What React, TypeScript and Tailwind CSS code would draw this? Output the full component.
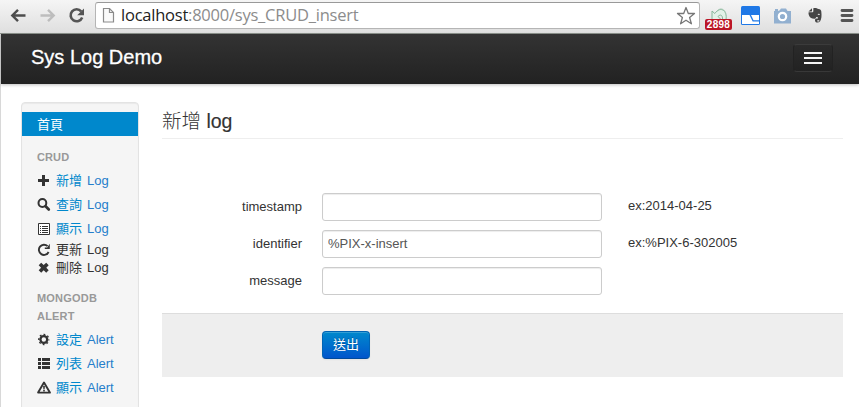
import type { ReactNode } from "react";

const icons: Record<string, ReactNode> = {
  plus: <path d="M5 1h3v4h4v3H8v4H5V8H1V5h4z" fill="#333" />,
  search: (
    <g fill="none" stroke="#333">
      <circle cx="5.4" cy="5" r="3.9" strokeWidth="2" />
      <path d="M8.6 8.2l3.2 3.3" strokeWidth="2.7" strokeLinecap="round" />
    </g>
  ),
  listAlt: (
    <g>
      <path d="M1.5 1.5h11v11h-11z" fill="#fff" stroke="#333" />
      <path d="M3 4.5h1M3 6.5h1M3 8.5h1M3 10.5h1M5 4.5h6M5 6.5h6M5 8.5h6M5 10.5h6" stroke="#333" />
    </g>
  ),
  refresh: (
    <g>
      <path d="M10.6 3.2A5.1 5.1 0 1 0 11.6 9" fill="none" stroke="#333" strokeWidth="1.9" />
      <path d="M12.8 .8v5.2H7.8V4.6h2.4z" fill="#333" />
    </g>
  ),
  remove: (
    <path d="M1.7 4.2L4.2 1.7 6.7 4.1 9.2 1.7l2.5 2.5L9.3 6.7l2.4 2.5-2.5 2.5-2.5-2.4-2.5 2.4-2.5-2.5 2.4-2.5z" fill="#333" />
  ),
  cog: (
    <g fill="none" stroke="#333">
      <circle cx="6.8" cy="6.5" r="3.4" strokeWidth="2.3" />
      <circle cx="6.8" cy="6.5" r="5" strokeWidth="1.4" strokeDasharray="1.8 2.127" strokeDashoffset="0.9" />
    </g>
  ),
  list: (
    <path d="M1 1h3v3H1zM5 1h8v3H5zM1 5h3v3H1zM5 5h8v3H5zM1 9h3v3H1zM5 9h8v3H5z" fill="#333" />
  ),
  warning: (
    <g>
      <path d="M7 1.6L12.9 11.6H1.1z" fill="none" stroke="#333" strokeWidth="1.9" strokeLinejoin="round" />
      <path d="M6.1 5h1.8l-.3 3.4H6.4zM6.2 9h1.6v1.4H6.2z" fill="#333" />
    </g>
  ),
};

function NavItem({ icon, han, word, link = true }: { icon: string; han: string; word: string; link?: boolean }) {
  return (
    <li
      className={
        link
          ? "flex h-6 items-center pl-[15px] text-[#0088cc]"
          : "flex h-[18px] items-center pl-[15px] text-[#333]"
      }
    >
      <svg width="14" height="14" viewBox="0 0 14 14" className="mr-[5px] shrink-0">
        {icons[icon]}
      </svg>
      <span className="w-[26px] whitespace-nowrap">{han}</span>
      <span className={link ? "ml-[5px] text-[#267ecb]" : "ml-[5px]"}>{word}</span>
    </li>
  );
}

function Field({ label, value = "", hint = "" }: { label: string; value?: string; hint?: string }) {
  return (
    <div className="mb-[9px] flex h-7">
      <label className="w-[140px] pt-[5px] text-right">{label}</label>
      <input
        type="text"
        defaultValue={value}
        className="ml-5 h-7 w-[280px] rounded-[3px] border border-[#ccc] bg-white px-[5px] pb-[2px] text-[13px] text-[#555] shadow-[inset_0_1px_1px_rgba(0,0,0,0.075)] outline-none"
      />
      <span className="ml-[26px] pt-[4px]">{hint}</span>
    </div>
  );
}

function BrowserBar() {
  return (
    <header className="flex h-[34px] shrink-0 border-b border-[#8e948e] bg-gradient-to-b from-[#f5f5f5] to-[#dfdfdf]">
      <svg width="95" height="32" viewBox="0 0 95 32" className="shrink-0" fill="none">
        <path d="M25.5 15.5H12.5M18 9.8l-5.7 5.7 5.7 5.7" stroke="#4d4d4d" strokeWidth="2.4" />
        <path d="M40.5 15.5h13M48 9.8l5.7 5.7-5.7 5.7" stroke="#bdbdbd" strokeWidth="2.4" />
        <path d="M81.2 11.3a6 6 0 1 0 1 6.2" stroke="#555" strokeWidth="2.6" />
        <path d="M84 8.5v6.8h-6.8z" fill="#555" />
      </svg>
      <div className="mt-[2px] flex h-[27px] w-[605px] shrink-0 items-center rounded-[3px] border border-[#b5b5b5] border-t-[#999] bg-white">
        <svg width="14" height="17" viewBox="0 0 14 17" className="ml-[6px]" fill="none">
          <path d="M1.5 1.5h6l4 4v9.5h-10z" fill="#fafafa" stroke="#8b8b8b" strokeWidth="1.2" />
          <path d="M7.5 1.5v4h4" stroke="#8b8b8b" strokeWidth="1.2" />
        </svg>
        <span className="ml-[5px] w-[555px] whitespace-nowrap pb-px font-['Open_Sans',sans-serif] text-[16.5px] leading-[24px] tracking-[-0.23px] text-[#8c8c8c]">
          <span className="text-[#222]">localhost</span>:8000/sys_CRUD_insert
        </span>
        <svg width="20" height="20" viewBox="0 0 20 20" className="shrink-0" fill="none">
          <path d="M10 1.5l2.3 6h6.2l-4.9 4 1.8 6.3L10 14.2l-5.4 3.6 1.8-6.3-4.9-4h6.2z" stroke="#777" strokeWidth="1.3" strokeLinejoin="round" />
        </svg>
      </div>
      <div className="relative h-8 w-[159px]">
        <svg width="159" height="32" viewBox="0 0 159 32" fill="none">
          <path d="M12 11v8.5h9l-3-3c2.6-2.6 4.6-1.6 4.6 3H26c1.6-9-5.6-14-11.2-6z" fill="#e3f1e8" stroke="#86b699" />
          <path d="M17 11.5c3-4.5 8-2.5 8.8 2.5" stroke="#a3c8b1" />
          <rect x="41" y="6" width="19" height="19" rx="1.5" fill="#1f78e6" />
          <path d="M42 15h7.5l3.2 6.5H59V24H42z" fill="#fff" />
          <path d="M51 15h8v5.3h-5.5z" fill="#fff" />
          <path d="M75 11V9h3v2l1.5-.5 1.5-2h5l1.5 2.5H91v12.5H74V11z" fill="#92b0d0" />
          <circle cx="82.5" cy="16.5" r="3.7" stroke="#fff" strokeWidth="2.2" />
          <path d="M113.3 8.3c2-.8 3.7.2 5.2.7 1.8.2 2.6.8 2.8 2.5.5 4 .3 7.700-1.300 10-1.300 1.600-4.700 1.400-5-.8-.2-2 1.500-2.600 2.800-1.900v-1.600c-1.500-.6-1.900.3-2.300 1.300-1.200.6-3.300.2-4.900-.7-1.700-1.600-2.300-3.600-2-5.500h3.800c.9 0 1.100-.5.9-4z" fill="#454545" />
          <path d="M112 8.200L108.400 11.500h2.800c.6 0 .8-.2.8-.8z" fill="#454545" />
          <path d="M117.600 14.700c.4-1.300 2.200-1 2.300.4zM117.300 20.200h2v1.200h-2z" fill="#eee" />
          <path d="M142 10.500h10M142 15.500h10M142 20.500h10" stroke="#555" strokeWidth="2.800" strokeLinecap="round" />
        </svg>
        <span className="absolute left-[5px] top-[19px] h-[11px] w-[27px] rounded-[2px] bg-[#bb1525] text-center text-[10px] font-bold leading-[11px] tracking-[0.3px] text-white">
          2898
        </span>
      </div>
    </header>
  );
}

export default function App() {
  return (
    <div className="flex h-[407px] w-[859px] flex-col overflow-hidden bg-white font-['Liberation_Sans','Noto_Sans_CJK_TC',sans-serif] text-[13px] leading-[18px] text-[#333]">
      <BrowserBar />
      <div className="flex min-h-0 flex-1 flex-col border-l border-[#d8d8d8]">
        <nav className="flex h-[50px] shrink-0 items-center justify-between bg-gradient-to-b from-[#333] to-[#222] pl-[30px] pr-[26px] shadow-[0_1px_3px_rgba(0,0,0,0.25)]">
          <span className="-mt-[5px] text-[20px] leading-[20px] text-white [-webkit-text-stroke:0.3px_white]">Sys Log Demo</span>
          <button className="-mt-[3px] flex h-[28px] w-[40px] flex-col items-center justify-center gap-[3px] rounded-[4px] border border-[#222] border-t-[#3b3b3b] border-b-[#383838] bg-gradient-to-b from-[#2b2b2b] to-[#222]">
            <span className="h-[2px] w-[18px] bg-[#f5f5f5]" />
            <span className="h-[2px] w-[18px] bg-[#f5f5f5]" />
            <span className="h-[2px] w-[18px] bg-[#f5f5f5]" />
          </button>
        </nav>
        <div className="flex min-h-0 flex-1 pl-5 pr-4 pt-[18px]">
          <aside className="h-[340px] w-[118px] shrink-0 rounded-[4px] border border-[#e3e3e3] bg-[#f5f5f5] pt-[9px] shadow-[inset_0_1px_1px_rgba(0,0,0,0.05)]">
            <ul>
              <li className="h-6 bg-[#0088cc] pl-[15px] leading-[25px] text-white">首頁</li>
              <li className="mt-[9px] h-6 py-[3px] pl-[15px] text-[11px] font-bold tracking-[0.1px] text-[#999]">CRUD</li>
              <NavItem icon="plus" han="新增" word="Log" />
              <NavItem icon="search" han="查詢" word="Log" />
              <NavItem icon="listAlt" han="顯示" word="Log" />
              <NavItem icon="refresh" han="更新" word="Log" link={false} />
              <NavItem icon="remove" han="刪除" word="Log" link={false} />
              <li className="mt-[9px] h-[42px] py-[3px] pl-[15px] text-[11px] font-bold tracking-[0.2px] text-[#999]">
                MONGODB
                <br />
                ALERT
              </li>
              <NavItem icon="cog" han="設定" word="Alert" />
              <NavItem icon="list" han="列表" word="Alert" />
              <NavItem icon="warning" han="顯示" word="Alert" />
            </ul>
          </aside>
          <main className="ml-[23px] flex-1">
            <h1 className="h-[37px] border-b border-[#eee] pt-px text-[19.5px] font-normal leading-[36px]">
              <span className="font-light">新增</span> <span className="[-webkit-text-stroke:0.15px_#333]">log</span>
            </h1>
            <form>
              <div className="h-[120px] pt-[54px]">
                <Field label="timestamp" hint="ex:2014-04-25" />
                <Field label="identifier" value="%PIX-x-insert" hint="ex:%PIX-6-302005" />
                <Field label="message" />
              </div>
              <div className="mt-[54px] h-16 border-t border-[#ddd] bg-[#eee] pl-[160px] pt-[17px]">
                <button
                  type="button"
                  className="block h-7 w-12 rounded-[4px] border border-[#0064b4] border-b-[#004a9c] bg-gradient-to-b from-[#0088cc] to-[#0055cc] leading-[26px] text-white shadow-[inset_0_1px_0_rgba(255,255,255,0.2),0_1px_2px_rgba(0,0,0,0.05)] [text-shadow:0_-1px_0_rgba(0,0,0,0.25)]"
                >
                  送出
                </button>
              </div>
            </form>
          </main>
        </div>
      </div>
    </div>
  );
}
